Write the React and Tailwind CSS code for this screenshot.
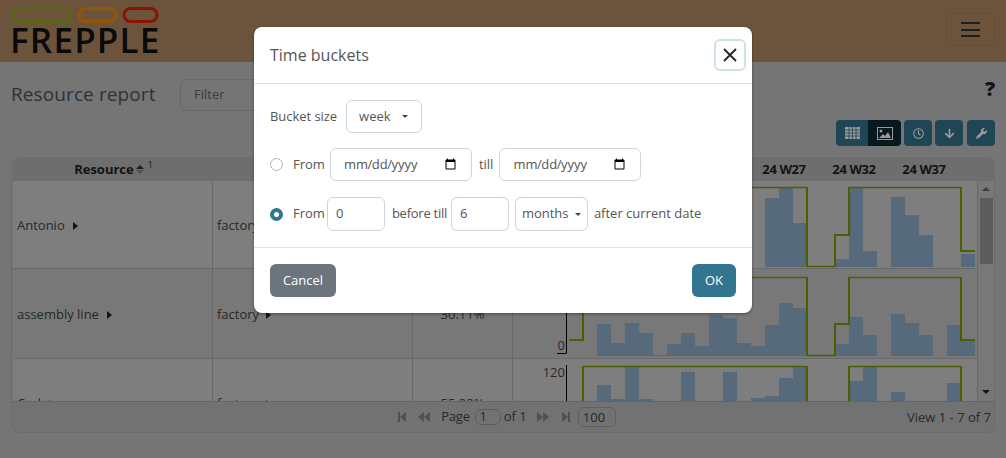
import React from 'react';
import { FaArrowDown, FaRegClock, FaWrench } from 'react-icons/fa';

const rows = [
  {
    name: 'Antonio',
    load: '',
    top: 181,
    height: 88,
    bg: 'bg-[#d2d2d2]',
    bars: [[765, 198], [779, 188], [793, 223], [835, 259], [849, 188], [863, 251], [891, 197], [905, 215], [919, 235], [961, 254]],
    base: 267,
    thin: 'M569 187.5H807M807 266.5H835M849 187.5H961',
    thick: 'M807 187V267M835 267V235H849V187M961 187V251H975',
    axis: null,
  },
  {
    name: 'assembly line',
    load: '30.11%',
    top: 269,
    height: 90,
    bg: 'bg-[#c8c8c8]',
    bars: [[597, 324], [611, 343], [625, 323], [639, 333], [653, 355], [667, 344], [681, 333], [695, 346], [709, 315], [723, 318], [737, 343], [751, 346], [765, 325], [779, 303], [793, 308], [835, 344], [849, 317], [863, 335], [891, 314], [905, 323], [919, 335], [947, 325], [961, 341]],
    base: 356,
    thin: 'M583 277.5H807M807 355.5H835M849 277.5H961',
    thick: 'M569 340H583V277M807 277V356M835 356V324H849V277M961 277V340H975',
    axis: 'bottom',
  },
  {
    name: 'Carl',
    load: '55.22%',
    top: 359,
    height: 88,
    bg: 'bg-[#d2d2d2]',
    bars: [[597, 385], [611, 399], [625, 367], [639, 399], [681, 372], [723, 372], [751, 398], [765, 396], [779, 378], [793, 366], [849, 381], [863, 366], [891, 392], [947, 383]],
    base: 445,
    thin: 'M583 366.5H807M849 366.5H961',
    thick: 'M583 366V445M807 366V445M849 366V445M961 366V445',
    axis: 'top',
  },
];

function Chart({ row }) {
  return (
    <svg width="464" height={row.height} viewBox={`513 ${row.top} 464 ${row.height}`} className="block shrink-0">
      {row.bars.map(([x, y]) => (
        <rect key={x} x={x} y={y} width="14" height={row.base - y} fill="#8fb1cf" />
      ))}
      <path d={row.thin} fill="none" stroke="#7f9e00" strokeWidth="1.4" />
      <path d={row.thick} fill="none" stroke="#7f9e00" strokeWidth="2" />
      {row.axis && <path d={`M566.5 ${row.top + 6}V${row.top + 84.5}`} stroke="#000" />}
      {row.axis === 'bottom' && <path d="M557 353.5H566" stroke="#000" />}
      {row.axis === 'bottom' && <text x="565" y="350" textAnchor="end" fontSize="13" fill="#444">0</text>}
      {row.axis === 'top' && <text x="565" y="377" textAnchor="end" fontSize="13" fill="#444">120</text>}
    </svg>
  );
}

function Caret() {
  return <span className="inline-block border-y-[4px] border-l-[5px] border-y-transparent border-l-[#222]" />;
}

function DownCaret() {
  return <span className="inline-block border-x-[3px] border-t-[3px] border-x-transparent border-t-[#444]" />;
}

function Radio({ checked }) {
  return (
    <span className={`inline-block size-[13px] rounded-full shrink-0 ${checked ? 'border-[4px] border-[#32758e] bg-white' : 'border border-[#adb5bd] bg-white'}`} />
  );
}

export default function App() {
  return (
    <div className="relative w-[1006px] h-[458px] overflow-hidden bg-[#c4c4c4] text-[13px] text-[#444] font-['Open_Sans',sans-serif]">
      {/* Navbar */}
      <header className="h-[62px] bg-[#b48c64] flex items-center justify-between pl-[11px] pr-[11px]">
        <div className="w-[150px]">
          <svg width="148" height="17" viewBox="0 0 148 17" className="block">
            <rect x="2.5" y="1.5" width="57" height="13" rx="6.5" fill="none" stroke="#96ab1e" strokeWidth="3" />
            <rect x="68" y="1.5" width="37" height="13" rx="6.5" fill="none" stroke="#fa8e00" strokeWidth="3" />
            <rect x="113" y="1.5" width="33" height="13" rx="6.5" fill="none" stroke="#e92100" strokeWidth="3" />
          </svg>
          <div className="ml-[-1px] text-[35px] leading-[32px] font-semibold text-[#111] tracking-[1.2px]">FREPPLE</div>
        </div>
        <button className="w-[49px] h-[33px] mt-[-3px] border border-[#a8825c] rounded-md flex flex-col items-center justify-center gap-[4.5px]">
          <span className="w-[19px] h-[2px] bg-[#333]" />
          <span className="w-[19px] h-[2px] bg-[#333]" />
          <span className="w-[19px] h-[2px] bg-[#333]" />
        </button>
      </header>

      {/* Title row */}
      <div className="h-[58px] flex items-start pl-[11px] pr-[11px] pt-[17px]">
        <h1 className="text-[19px] leading-[30px] w-[169px] tracking-[0.1px] text-[#4a5560]">Resource report</h1>
        <div className="w-[300px] h-[32px] border border-[#b0b0b0] rounded-md flex items-center pl-[13px] text-[#666]">Filter</div>
        <div className="ml-auto text-[20px] font-extrabold leading-[20px] text-[#222]">?</div>
      </div>

      {/* Toolbar */}
      <div className="h-[37px] flex items-start justify-end gap-[3px] pr-[11px] text-white">
        <div className="flex h-[26px] rounded overflow-hidden">
          <button className="w-[32px] bg-[#32758e] flex items-center justify-center">
            <svg width="15" height="12" viewBox="0 0 15 12">
              <path d="M0 0h15v12H0z" fill="#fff" />
              <path d="M0 3h15M0 6h15M0 9h15M4 0v12M7.5 0v12M11 0v12" stroke="#32758e" strokeWidth="0.8" />
            </svg>
          </button>
          <button className="w-[33px] bg-[#0d2835] flex items-center justify-center">
            <svg width="16" height="13" viewBox="0 0 16 13">
              <rect x="0.5" y="0.5" width="15" height="12" fill="none" stroke="#fff" />
              <circle cx="4" cy="4" r="1.5" fill="#fff" />
              <path d="M2 11l4-4 2 2 3-4 3 6z" fill="#fff" />
            </svg>
          </button>
        </div>
        <button className="w-[28px] h-[26px] rounded bg-[#32758e] flex items-center justify-center">
          <FaRegClock size={11} color="#fff" />
        </button>
        <button className="w-[28px] h-[26px] rounded bg-[#32758e] flex items-center justify-center">
          <FaArrowDown size={11} color="#fff" />
        </button>
        <button className="w-[28px] h-[26px] ml-[1px] rounded bg-[#32758e] flex items-center justify-center">
          <FaWrench size={11} color="#fff" />
        </button>
      </div>

      {/* Grid */}
      <section className="mx-[11px] h-[276px] border border-[#b4b4b4] rounded-lg overflow-hidden flex flex-col pl-[1px]">
        <div className="flex h-[23px] bg-[#b8b8b8] font-bold text-[#222] items-center shrink-0">
          <div className="w-[201px] flex items-center justify-center gap-[1px]">
            Resource
            <span className="flex flex-col gap-[1px] ml-[1px]">
              <span className="border-x-[4px] border-b-[4px] border-x-transparent border-b-[#333]" />
              <span className="border-x-[4px] border-t-[4px] border-x-transparent border-t-[#888]" />
            </span>
            <sup className="text-[9px] font-normal ml-[3px]">1</sup>
          </div>
          <div className="w-[535px]" />
          <div className="w-[70px] text-center tracking-[-0.4px]">24 W27</div>
          <div className="w-[70px] text-center tracking-[-0.4px]">24 W32</div>
          <div className="w-[70px] text-center tracking-[-0.4px]">24 W37</div>
        </div>

        <div className="flex flex-1 min-h-0 overflow-hidden">
          <div className="w-[964px] shrink-0">
            {rows.map((row) => (
              <div key={row.name} className={`flex items-stretch border-b border-[#b0b0b0] ${row.bg}`} style={{ height: row.height }}>
                <div className="w-[200px] border-r border-[#b0b0b0] pl-[4px] pt-[2px] flex items-center gap-[8px]">
                  {row.name} <Caret />
                </div>
                <div className="w-[200px] border-r border-[#b0b0b0] pl-[4px] pt-[2px] flex items-center gap-[7px]">
                  factory <Caret />
                </div>
                <div className="w-[100px] border-r border-[#b0b0b0] pt-[2px] flex items-center justify-center">{row.load}</div>
                <Chart row={row} />
              </div>
            ))}
          </div>
          {/* Scrollbar */}
          <div className="w-[17px] border-l border-[#b0b0b0] bg-[#c8c8c8] flex flex-col items-center pt-[6px] pb-[7px]">
            <span className="border-x-[4px] border-b-[4px] border-x-transparent border-b-[#666]" />
            <span className="w-[13px] h-[66px] mt-[7px] bg-[#9c9c9c]" />
            <span className="mt-auto border-x-[4px] border-t-[4px] border-x-transparent border-t-[#222]" />
          </div>
        </div>

        <div className="h-[31px] shrink-0 border-t border-[#a8a8a8] bg-[#bebebe] flex items-center relative">
          <div className="flex-1 flex items-center justify-center pl-[7px] text-[#444]">
            <span className="flex items-center gap-[12px] mr-[11px]">
              <span className="flex items-center">
                <span className="w-[2px] h-[10px] bg-[#888]" />
                <span className="border-y-[5px] border-r-[6px] border-y-transparent border-r-[#888]" />
              </span>
              <span className="flex items-center">
                <span className="border-y-[5px] border-r-[6px] border-y-transparent border-r-[#888]" />
                <span className="border-y-[5px] border-r-[6px] border-y-transparent border-r-[#888]" />
              </span>
            </span>
            <span className="tracking-[-0.2px]">Page</span>
            <span className="ml-[5px] mr-[3px] w-[26px] h-[16px] border border-[#999] rounded-md text-[12px] leading-[14px] pl-[4px]">1</span>
            <span>of 1</span>
            <span className="flex items-center gap-[13px] ml-[10px]">
              <span className="flex items-center">
                <span className="border-y-[5px] border-l-[6px] border-y-transparent border-l-[#888]" />
                <span className="border-y-[5px] border-l-[6px] border-y-transparent border-l-[#888]" />
              </span>
              <span className="flex items-center">
                <span className="border-y-[5px] border-l-[6px] border-y-transparent border-l-[#888]" />
                <span className="w-[2px] h-[10px] bg-[#888]" />
              </span>
            </span>
            <span className="ml-[8px] w-[38px] h-[20px] border border-[#a0a0a0] rounded-md pl-[4px] leading-[18px]">100</span>
          </div>
          <div className="absolute right-[3px] top-[6px]">View 1 - 7 of 7</div>
        </div>
      </section>

      {/* Backdrop */}
      <div className="absolute inset-0 bg-black/40" />

      {/* Modal */}
      <div className="absolute inset-0 flex justify-center items-start pt-[27px] text-[#555]">
        <div className="w-[498px] h-[286px] bg-white rounded-lg flex flex-col shadow-[0_1px_3px_rgba(0,0,0,0.4)]">
          <div className="h-[57px] border-b border-[#dee2e6] flex items-center justify-between pl-[16px] pr-[6px]">
            <h2 className="text-[16px] leading-6 text-[#555]">Time buckets</h2>
            <button className="size-[32px] mt-[-1px] rounded-md border-2 border-[#cfe0e7] flex items-center justify-center">
              <svg width="14" height="14" viewBox="0 0 14 14">
                <path d="M1 1l12 12M13 1L1 13" stroke="#222" strokeWidth="1.8" />
              </svg>
            </button>
          </div>

          <div className="h-[164px] border-b border-[#dee2e6] pl-[16px] flex flex-col">
            <div className="flex items-center mt-[16px] h-[33px]">
              <span className="tracking-[-0.05px]">Bucket size</span>
              <span className="ml-[9px] w-[76px] h-[33px] border border-[#ced4da] rounded-md flex items-center justify-between pl-[12px] pr-[13px]">
                week <DownCaret />
              </span>
            </div>
            <div className="flex items-center mt-[15px] h-[33px]">
              <Radio />
              <span className="ml-[10px]">From</span>
              <input type="date" className="ml-[5px] w-[142px] h-[33px] border border-[#ced4da] rounded-md pl-[12px] pr-[12px] text-[#555] text-[13px] [&::-webkit-datetime-edit-text]:mx-[-1.5px]" />
              <span className="ml-[7px]">till</span>
              <input type="date" className="ml-[6px] w-[142px] h-[33px] border border-[#ced4da] rounded-md pl-[12px] pr-[12px] text-[#555] text-[13px] [&::-webkit-datetime-edit-text]:mx-[-1.5px]" />
            </div>
            <div className="flex items-center mt-[16px] h-[34px]">
              <Radio checked />
              <span className="ml-[10px]">From</span>
              <span className="ml-[2px] w-[58px] h-[34px] border border-[#ced4da] rounded-md flex items-center pl-[8px]">0</span>
              <span className="ml-[7px] w-[55px] tracking-[-0.25px] whitespace-nowrap">before till</span>
              <span className="ml-[4px] w-[58px] h-[34px] border border-[#ced4da] rounded-md flex items-center pl-[8px]">6</span>
              <span className="ml-[6px] w-[73px] h-[34px] border border-[#ced4da] rounded-md flex items-center justify-between pl-[6px] pr-[6px]">
                months <DownCaret />
              </span>
              <span className="ml-[6px]">after current date</span>
            </div>
          </div>

          <div className="flex-1 flex items-center justify-between px-[16px]">
            <button className="w-[66px] h-[33px] rounded-md bg-[#6c757d] text-white">Cancel</button>
            <button className="w-[44px] h-[33px] rounded-md bg-[#32758e] text-white">OK</button>
          </div>
        </div>
      </div>
    </div>
  );
}
